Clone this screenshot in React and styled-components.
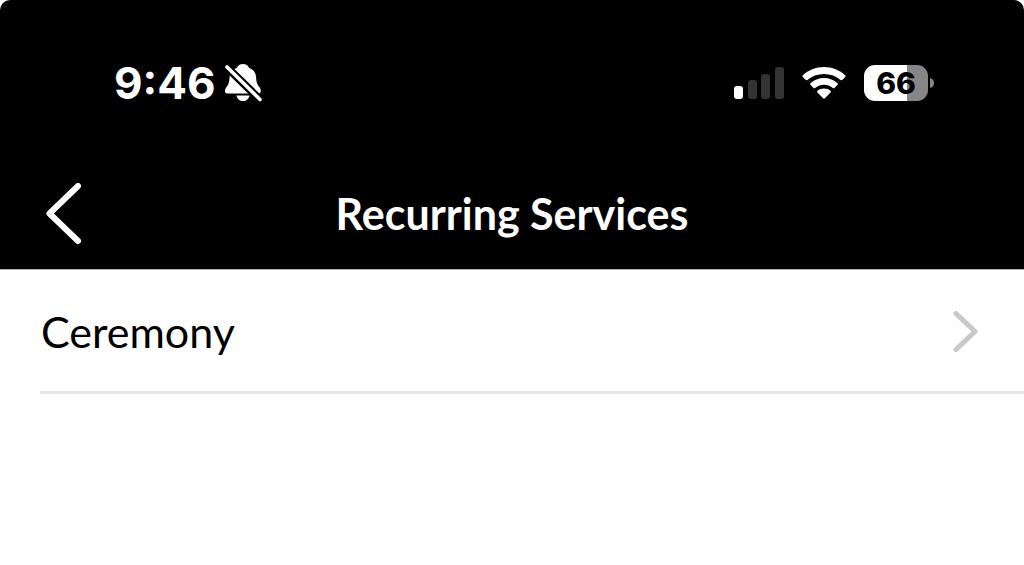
import React from "react";
import styled, { createGlobalStyle } from "styled-components";

const GlobalStyle = createGlobalStyle`
  *, *::before, *::after { box-sizing: border-box; }
  body { margin: 0; background: #fff; font-family: Lato, "Liberation Sans", sans-serif; }
`;

const Header = styled.header`
  background: #000;
  color: #fff;
  border-bottom: 1px solid #b4b0b2;
  border-radius: 10px 10px 0 0;
`;

const StatusBar = styled.div`
  display: flex;
  align-items: center;
  justify-content: space-between;
  height: 166px;
  padding: 0 90px 0 114px;
  font-family: Inter, "Liberation Sans", sans-serif;
`;

const StatusGroup = styled.div`
  display: flex;
  align-items: center;
  gap: ${({ $gap }) => $gap}px;
`;

const Time = styled.time`
  font-size: 44px;
  line-height: 52px;
  font-weight: 700;
`;

const Glyph = styled.svg`
  display: block;
  flex: none;
`;

const Battery = styled.div`
  display: flex;
  align-items: center;
  gap: 2px;
`;

const BatteryBody = styled.div`
  width: 64px;
  height: 36px;
  border-radius: 11px;
  background: linear-gradient(to right, #fff ${({ $level }) => $level}%, #868686 ${({ $level }) => $level}%);
  color: #000;
  font-size: 30px;
  line-height: 36px;
  font-weight: 800;
  text-align: center;
`;

const NavBar = styled.div`
  display: grid;
  grid-template-columns: 80px 1fr 80px;
  align-items: center;
  height: 103px;
  padding: 0 20px 8px;
`;

const BackButton = styled.button`
  display: flex;
  justify-content: center;
  width: 88px;
  padding: 0;
  border: 0;
  background: none;
  color: inherit;
  cursor: pointer;
`;

const Title = styled.h1`
  margin: 0;
  font-size: 43px;
  line-height: 52px;
  font-weight: 700;
  text-align: center;
  white-space: nowrap;
`;

const List = styled.ul`
  margin: 0;
  padding: 0 0 0 40px;
  list-style: none;
`;

const Row = styled.li`
  border-bottom: 3px solid #e8e8e8;
`;

const RowLink = styled.a`
  display: flex;
  align-items: center;
  justify-content: space-between;
  height: 121px;
  padding: 2px 44px 0 1px;
  color: #000;
  font-size: 43px;
  line-height: 52px;
  text-decoration: none;
`;

function MutedBell() {
  return (
    <Glyph width="38" height="40" viewBox="0 0 38 40" fill="#fff" role="img" aria-label="Silent mode">
      <path d="M19 1c-3 0-5.300 1.600-6 3.800C8.500 6.500 5.800 10 5.500 15c-.3 4.500-1 6.500-3 9C.5 26.500.2 30.500 3 30.500h31.500c2.800 0 3-3.500.8-6.500-2.300-3-2.900-5-3.200-9.500C31.800 9.800 29.500 6.500 25 4.800 24.300 2.600 22 1 19 1Z" />
      <path d="M12.500 32.500h13c-.6 3.500-3.200 5.500-6.500 5.500s-5.900-2-6.500-5.500Z" />
      <path d="M0 1.500 38 38.500" stroke="#000" strokeWidth="8" />
      <path d="M3 4 36 36.500" stroke="#fff" strokeWidth="3.600" strokeLinecap="round" />
    </Glyph>
  );
}

function Signal() {
  return (
    <Glyph width="50" height="34" viewBox="0 0 50 34" fill="#333" role="img" aria-label="Signal, one bar of four">
      <rect x="0" y="20" width="9" height="13" rx="3" fill="#fff" />
      <rect x="14" y="14" width="9" height="19" rx="3" />
      <rect x="27" y="8" width="9" height="25" rx="3" />
      <rect x="41" y="1" width="9" height="32" rx="3" />
    </Glyph>
  );
}

function Wifi() {
  return (
    <Glyph width="44" height="34" viewBox="0 0 44 34" fill="#fff" role="img" aria-label="Wi-Fi">
      <path d="M22 1C13.700 1 6.300 4.200.8 9.300c-.5.500-.5 1.100 0 1.600l3 3c.5.500 1.100.5 1.600 0C9.900 10.200 15.500 8 22 8s12.100 2.200 16.600 5.900c.5.500 1.100.5 1.600 0l3-3c.5-.5.5-1.100 0-1.600C37.700 4.200 30.300 1 22 1Z" />
      <path d="M22 12c-5.300 0-10 2-13.600 5.200-.5.500-.5 1.100 0 1.600l3.200 3.200c.4.400 1 .4 1.500 0 2.500-2.100 5.500-3.300 8.900-3.300s6.400 1.200 8.900 3.300c.5.400 1.100.4 1.500 0l3.200-3.200c.5-.5.5-1.100 0-1.600C32 14 27.300 12 22 12Z" />
      <path d="M22 22.500c-2.500 0-4.800.9-6.500 2.300-.5.400-.5 1.100 0 1.600l5.600 5.900c.5.500 1.300.5 1.800 0l5.600-5.900c.5-.5.5-1.200 0-1.600-1.700-1.400-4-2.300-6.500-2.300Z" />
    </Glyph>
  );
}

export default function App() {
  return (
    <>
      <GlobalStyle />
      <Header>
        <StatusBar>
          <StatusGroup $gap={8}>
            <Time>9:46</Time>
            <MutedBell />
          </StatusGroup>
          <StatusGroup $gap={18}>
            <Signal />
            <Wifi />
            <Battery>
              <BatteryBody $level={67}>66</BatteryBody>
              <Glyph width="4" height="12" viewBox="0 0 4 12" fill="#868686" aria-hidden="true">
                <path d="M0 1c2.500.5 4 2.500 4 5s-1.500 4.500-4 5Z" />
              </Glyph>
            </Battery>
          </StatusGroup>
        </StatusBar>
        <NavBar>
          <BackButton type="button" aria-label="Back">
            <Glyph width="36" height="62" viewBox="0 0 36 62" fill="none" stroke="#fff" strokeWidth="6" strokeLinecap="round" strokeLinejoin="round">
              <path d="M32 3 3.500 30.500 32 58" />
            </Glyph>
          </BackButton>
          <Title>Recurring Services</Title>
        </NavBar>
      </Header>
      <main>
        <List>
          <Row>
            <RowLink href="#ceremony">
              Ceremony
              <Glyph width="28" height="42" viewBox="0 0 28 42" fill="none" stroke="#c7c7cc" strokeWidth="5" strokeLinecap="round" strokeLinejoin="round" aria-hidden="true">
                <path d="M4 2.500 23 20.500 4 38.500" />
              </Glyph>
            </RowLink>
          </Row>
        </List>
      </main>
    </>
  );
}
